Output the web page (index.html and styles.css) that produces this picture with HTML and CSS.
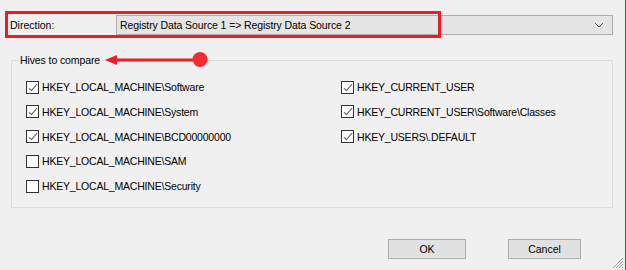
FILE: index.html
```html
<!DOCTYPE html>
<html lang="en">
<head>
    <meta charset="UTF-8">
    <title>Compare Options</title>
    <link rel="stylesheet" href="styles.css">
</head>
<body>
    <div class="dialog">
        <div class="direction-row">
            <label class="direction-label">Direction:</label>
            <div class="combo">
                <span class="combo-text">Registry Data Source 1 =&gt; Registry Data Source 2</span>
                <svg class="combo-arrow" width="10" height="6" viewBox="0 0 10 6">
                    <path d="M1 1 L5 5 L9 1" fill="none" stroke="#555" stroke-width="1"/>
                </svg>
            </div>
        </div>

        <fieldset class="hives">
            <legend>Hives to compare</legend>
            <div class="hive-grid">
                <div class="hive-col">
                    <label class="check"><span class="box checked"></span>HKEY_LOCAL_MACHINE\Software</label>
                    <label class="check"><span class="box checked"></span>HKEY_LOCAL_MACHINE\System</label>
                    <label class="check"><span class="box checked"></span>HKEY_LOCAL_MACHINE\BCD00000000</label>
                    <label class="check"><span class="box"></span>HKEY_LOCAL_MACHINE\SAM</label>
                    <label class="check"><span class="box"></span>HKEY_LOCAL_MACHINE\Security</label>
                </div>
                <div class="hive-col">
                    <label class="check"><span class="box checked"></span>HKEY_CURRENT_USER</label>
                    <label class="check"><span class="box checked"></span>HKEY_CURRENT_USER\Software\Classes</label>
                    <label class="check"><span class="box checked"></span>HKEY_USERS\.DEFAULT</label>
                </div>
            </div>
        </fieldset>

        <div class="buttons">
            <button class="btn btn-ok">OK</button>
            <button class="btn btn-cancel">Cancel</button>
        </div>

        <!-- annotations drawn over the dialog -->
        <div class="mark-box"></div>
        <svg class="mark-arrow" width="110" height="20" viewBox="0 0 110 20">
            <line x1="12" y1="10" x2="98" y2="10" stroke="#ee1c25" stroke-width="3"/>
            <polygon points="4,10 16,5 16,15" fill="#ee1c25"/>
            <circle cx="99" cy="9.5" r="7.5" fill="#f52a32"/>
        </svg>
        <svg class="grip" width="12" height="12" viewBox="0 0 12 12">
            <path d="M11 1 L1 11 M11 4 L4 11 M11 7 L7 11 M11 10 L10 11" stroke="#a0a0a0" stroke-width="1"/>
        </svg>
    </div>
</body>
</html>
```

FILE: styles.css
```css
* {
    margin: 0;
    padding: 0;
    box-sizing: border-box;
}

body {
    background-color: #f0f0f0;
    font-family: "Liberation Sans", Arial, sans-serif;
    font-size: 10.5px;
    color: #000;
}

.dialog {
    position: relative;
    width: 626px;
    height: 270px;
    border-right: 1px solid #2b5aa5;
    overflow: hidden;
}

.direction-row {
    display: flex;
    align-items: center;
    padding: 15px 0 0 10px;
}

.direction-label {
    width: 106px;
}

.combo {
    width: 497px;
    height: 20px;
    border: 1px solid #adadad;
    background: #e5e5e5;
    display: flex;
    align-items: center;
    justify-content: space-between;
    padding: 0 8px 0 3px;
}

.combo-text {
    letter-spacing: -0.1px;
}

.hives {
    margin: 19px 0 0 11px;
    width: 602px;
    height: 154px;
    border: 1px solid #dcdcdc;
    padding: 0 0 0 14px;
}

.hives legend {
    margin-left: -7px;
    padding: 0 2px 0 1px;
    letter-spacing: -0.1px;
}

.hive-grid {
    display: grid;
    grid-template-columns: 315px 1fr;
    padding-top: 14px;
}

.hive-col {
    display: flex;
    flex-direction: column;
    gap: 10.8px;
}

.check {
    display: flex;
    align-items: center;
    height: 14px;
    letter-spacing: -0.2px;
}

.box {
    width: 13px;
    height: 13px;
    border: 1px solid #333;
    background: #fff;
    margin-right: 3px;
    position: relative;
}

.box.checked::after {
    content: "";
    position: absolute;
    left: 4px;
    top: 0px;
    width: 3px;
    height: 8px;
    border-right: 1px solid #555;
    border-bottom: 1px solid #555;
    transform: rotate(40deg);
}

.buttons {
    display: flex;
    justify-content: flex-end;
    gap: 42px;
    padding: 31px 44px 0 0;
}

.btn {
    height: 20px;
    border: 1px solid #adadad;
    background: #e1e1e1;
    font-family: inherit;
    font-size: 10.5px;
    color: #000;
}

.btn-ok {
    width: 78px;
}

.btn-cancel {
    width: 73px;
}

.mark-box {
    position: absolute;
    left: 5px;
    top: 11px;
    width: 436px;
    height: 27px;
    border: 3px solid #ee1c25;
}

.mark-arrow {
    position: absolute;
    left: 101px;
    top: 50px;
}

.grip {
    position: absolute;
    right: 1px;
    bottom: 1px;
}
```
